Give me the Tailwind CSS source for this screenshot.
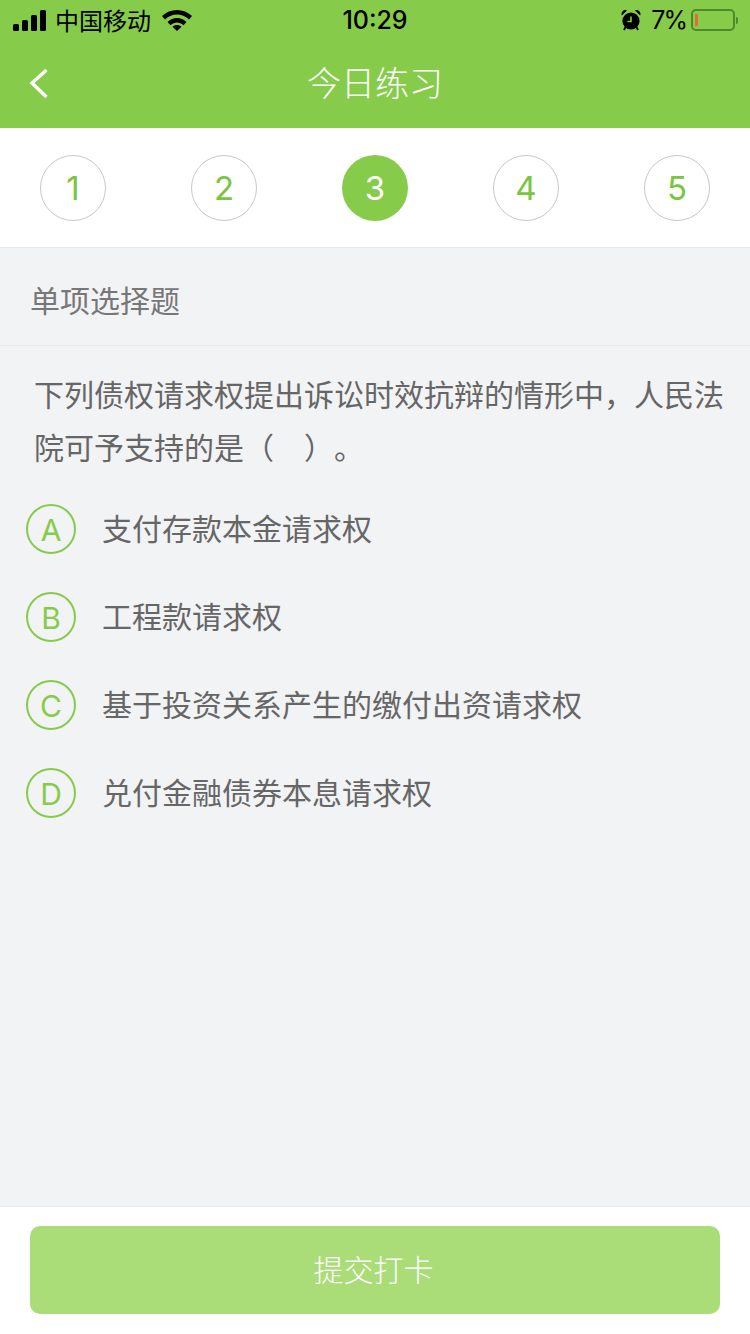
<!DOCTYPE html>
<html lang="zh-CN">
<head>
  <meta charset="UTF-8">
  <meta name="viewport" content="width=device-width, initial-scale=1.0">
  <title>今日练习</title>
  <script src="https://cdn.jsdelivr.net/npm/@tailwindcss/browser@4"></script>
</head>
<body class="bg-[#f2f3f5] font-['Inter','Noto_Sans_CJK_SC',sans-serif]">
  <div class="w-[750px] h-[1334px] flex flex-col overflow-hidden">
    <!-- 顶部 -->
    <div class="h-[128px] bg-[#86cc4a] shrink-0">
      <div class="h-[40px] flex items-center justify-between pl-[13px] pr-[12px] text-black">
        <div class="flex items-center">
          <div class="flex items-end gap-[3px] h-[21px]">
            <span class="w-[6px] h-[7px] rounded-[1.5px] bg-black"></span>
            <span class="w-[6px] h-[11px] rounded-[1.5px] bg-black"></span>
            <span class="w-[6px] h-[16px] rounded-[1.5px] bg-black"></span>
            <span class="w-[6px] h-[21px] rounded-[1.5px] bg-black"></span>
          </div>
          <span class="ml-[9px] text-[24px] leading-none font-['Noto_Sans_CJK_SC']">中国移动</span>
          <svg class="ml-[11px]" width="30" height="22" viewBox="0 0 30 22">
            <path d="M0 7 C8 -1 22 -1 30 7 L27 10.5 C20 3.8 10 3.8 3 10.5 Z" fill="#000"/>
            <path d="M5.5 13 C11 7.5 19 7.5 24.5 13 L21.5 16.3 C17.5 12.5 12.5 12.5 8.5 16.3 Z" fill="#000"/>
            <path d="M10.5 17.8 C13 15.3 17 15.3 19.5 17.8 L15 22 Z" fill="#000"/>
          </svg>
        </div>
        <div class="absolute left-0 w-[750px] pt-[1px] text-center text-[25px] leading-none font-medium pointer-events-none">10:29</div>
        <div class="flex items-center">
          <svg width="20" height="22" viewBox="0 0 20 22">
            <circle cx="10" cy="12" r="8.6" fill="#000"/>
            <path d="M10 7.5 V12.5 H6.5" stroke="#86cc4a" stroke-width="1.6" fill="none"/>
            <path d="M.8 6.5 L6 1.5 C3 0 -.5 3 .8 6.5 Z M19.2 6.5 L14 1.5 C17 0 20.5 3 19.2 6.5 Z" fill="#000"/>
            <path d="M4.5 18 L3 21 M15.5 18 L17 21" stroke="#000" stroke-width="1.8"/>
          </svg>
          <span class="ml-[10px] text-[25px] leading-none tracking-[-2px]">7%</span>
          <div class="ml-[5px] w-[44px] h-[22px] rounded-[5px] border-2 border-[#4f8a2a] pl-[2px] py-[3px]">
            <div class="w-[3px] h-full bg-[#e8683a]"></div>
          </div>
          <div class="ml-[1px] w-[2px] h-[7px] rounded-r-[2px] bg-[#4f8a2a]"></div>
        </div>
      </div>
      <div class="h-[88px] relative flex items-center justify-center">
        <svg class="absolute left-[28px] top-[27px]" width="22" height="32" viewBox="0 0 22 32">
          <path d="M18.5 3 L4 16 L18.5 30" stroke="#fff" stroke-width="3.4" fill="none"/>
        </svg>
        <h1 class="text-[34px] leading-none text-white font-light">今日练习</h1>
      </div>
    </div>

    <!-- 题号 -->
    <div class="h-[120px] shrink-0 bg-white border-b border-[#e8e9eb] px-[40px] pt-[27px] flex justify-between items-start text-[33px] text-[#7cc443]">
      <div class="w-[66px] h-[66px] pt-[2px] rounded-full border border-[#c8c8c8] flex items-center justify-center">1</div>
      <div class="w-[66px] h-[66px] pt-[2px] rounded-full border border-[#c8c8c8] flex items-center justify-center">2</div>
      <div class="w-[66px] h-[66px] pt-[2px] rounded-full bg-[#86cc4a] text-white flex items-center justify-center">3</div>
      <div class="w-[66px] h-[66px] pt-[2px] rounded-full border border-[#c8c8c8] flex items-center justify-center">4</div>
      <div class="w-[66px] h-[66px] pt-[2px] rounded-full border border-[#c8c8c8] flex items-center justify-center">5</div>
    </div>

    <!-- 题目 -->
    <div class="flex-1">
      <div class="h-[98px] border-b border-[#e8e9eb] pl-[30px] pt-[8px] flex items-center text-[30px] leading-none text-[#777]">单项选择题</div>
      <p class="pl-[34px] pr-[20px] pt-[23px] text-[30px] leading-[53px] text-[#666] [text-spacing-trim:space-all]">下列债权请求权提出诉讼时效抗辩的情形中，人民法院可予支持的是（　）。</p>
      <ul class="pl-[26px] pt-[10px] text-[30px] text-[#666]">
        <li class="h-[88px] flex items-center">
          <span class="w-[50px] h-[50px] pt-[3px] shrink-0 rounded-full border-2 border-[#86cc4a] text-[#86cc4a] flex items-center justify-center">A</span>
          <span class="ml-[26px]">支付存款本金请求权</span>
        </li>
        <li class="h-[88px] flex items-center">
          <span class="w-[50px] h-[50px] pt-[3px] shrink-0 rounded-full border-2 border-[#86cc4a] text-[#86cc4a] flex items-center justify-center">B</span>
          <span class="ml-[26px]">工程款请求权</span>
        </li>
        <li class="h-[88px] flex items-center">
          <span class="w-[50px] h-[50px] pt-[3px] shrink-0 rounded-full border-2 border-[#86cc4a] text-[#86cc4a] flex items-center justify-center">C</span>
          <span class="ml-[26px]">基于投资关系产生的缴付出资请求权</span>
        </li>
        <li class="h-[88px] flex items-center">
          <span class="w-[50px] h-[50px] pt-[3px] shrink-0 rounded-full border-2 border-[#86cc4a] text-[#86cc4a] flex items-center justify-center">D</span>
          <span class="ml-[26px]">兑付金融债券本息请求权</span>
        </li>
      </ul>
    </div>

    <!-- 底部按钮 -->
    <div class="h-[128px] shrink-0 bg-white border-t border-[#e8e9eb] px-[30px] pt-[19px]">
      <button class="w-[690px] h-[88px] pr-[3px] rounded-[10px] bg-[#aadc78] text-[30px] text-white font-light">提交打卡</button>
    </div>
  </div>
</body>
</html>
